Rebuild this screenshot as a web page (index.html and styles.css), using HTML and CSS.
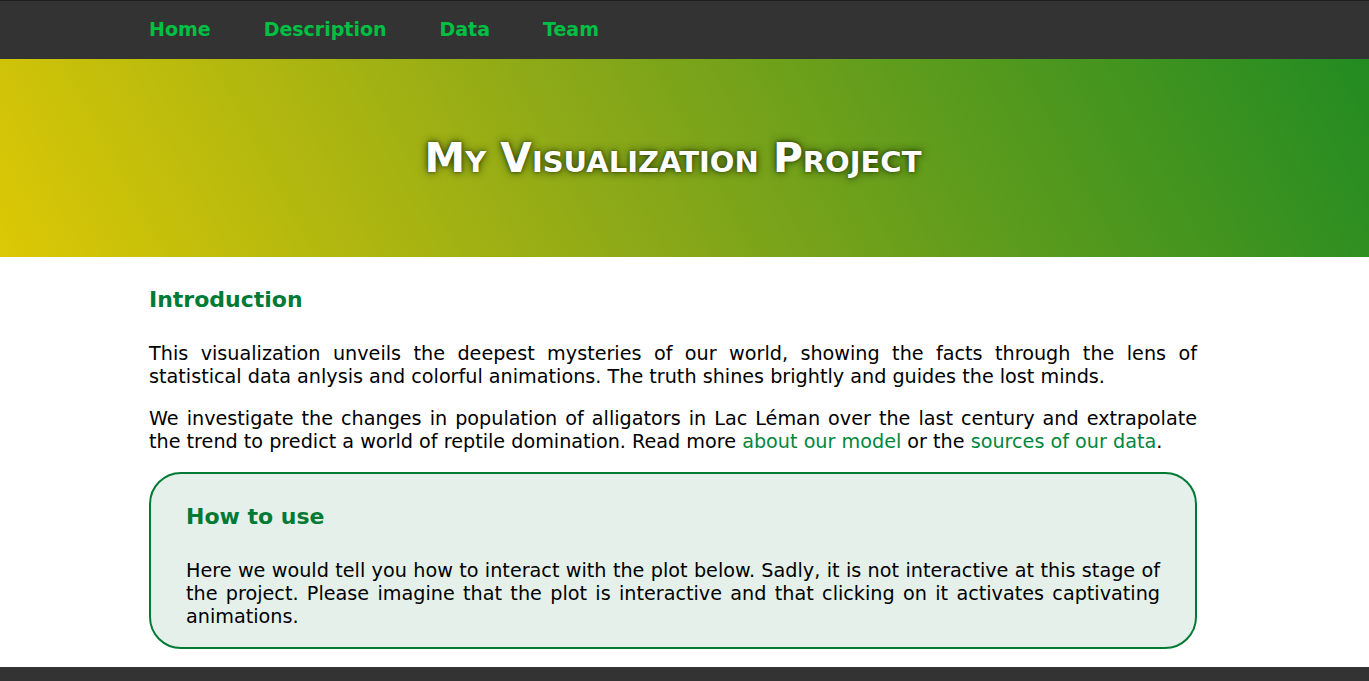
FILE: index.html
```html
<!DOCTYPE html>
<html lang="en">
<head>
<meta charset="utf-8">
<title>My Visualization Project</title>
<link rel="stylesheet" href="styles.css">
</head>
<body>
<nav class="topnav">
  <div class="nav-inner">
    <a class="nav-link" href="#">Home</a>
    <a class="nav-link" href="#">Description</a>
    <a class="nav-link" href="#">Data</a>
    <a class="nav-link" href="#">Team</a>
  </div>
</nav>
<header class="hero">
  <div class="hero-inner">
    <h1 class="hero-title">My Visualization Project</h1>
  </div>
</header>
<main class="content">
  <h2 class="section-title">Introduction</h2>
  <p class="text">This visualization unveils the deepest mysteries of our world, showing the facts through the lens of statistical data anlysis and colorful animations. The truth shines brightly and guides the lost minds.</p>
  <p class="text">We investigate the changes in population of alligators in Lac Léman over the last century and extrapolate the trend to predict a world of reptile domination. Read more <a class="inline-link" href="#">about our model</a> or the <a class="inline-link" href="#">sources of our data</a>.</p>
  <section class="howto">
    <h3 class="section-title howto-title">How to use</h3>
    <p class="text howto-text">Here we would tell you how to interact with the plot below. Sadly, it is not interactive at this stage of the project. Please imagine that the plot is interactive and that clicking on it activates captivating animations.</p>
  </section>
</main>
<footer class="footer"></footer>
</body>
</html>
```

FILE: styles.css
```css
* { box-sizing: border-box; }
html, body {
  margin: 0;
  padding: 0;
}
body {
  font-family: "DejaVu Sans", "Liberation Sans", sans-serif;
  font-size: 19.2px;
  color: #000;
  background: #fff;
}
.topnav {
  background: #333333;
  border-top: 1px solid #1e1e1e;
  height: 59px;
}
.nav-inner {
  display: flex;
  align-items: center;
  gap: 53px;
  height: 56px;
  padding-left: 149px;
}
.nav-link {
  color: #00c043;
  font-weight: bold;
  font-size: 19px;
  text-decoration: none;
}
.hero {
  height: 198px;
  display: flex;
  align-items: center;
  background: linear-gradient(62deg, #dcc805 0%, #8aa818 45%, #228b22 100%);
}
.hero-inner {
  width: 1048px;
  margin-left: 149px;
  display: flex;
  justify-content: center;
}
.hero-title {
  margin: 0;
  color: #fff;
  font-size: 40.8px;
  font-weight: bold;
  font-variant: small-caps;
  text-shadow: 0 0 8px rgba(20, 40, 0, 0.85), 0 0 3px rgba(20, 40, 0, 0.6);
}
.content {
  width: 1048px;
  margin-left: 149px;
  padding-top: 30px;
  padding-bottom: 18px;
}
.section-title {
  margin: 0 0 30px 0;
  font-size: 22px;
  font-weight: bold;
  color: #007a35;
}
.text {
  margin: 0 0 19px 0;
  line-height: 23px;
  text-align: justify;
}
.inline-link {
  color: #00873c;
  text-decoration: none;
}
.howto {
  margin-top: 19px;
  border: 2px solid #007a35;
  border-radius: 32px;
  background: #e5f0ea;
  padding: 30px 35px 19px 35px;
}
.howto-text {
  margin: 0;
}
.footer {
  background: #333333;
  height: 60px;
}
```
